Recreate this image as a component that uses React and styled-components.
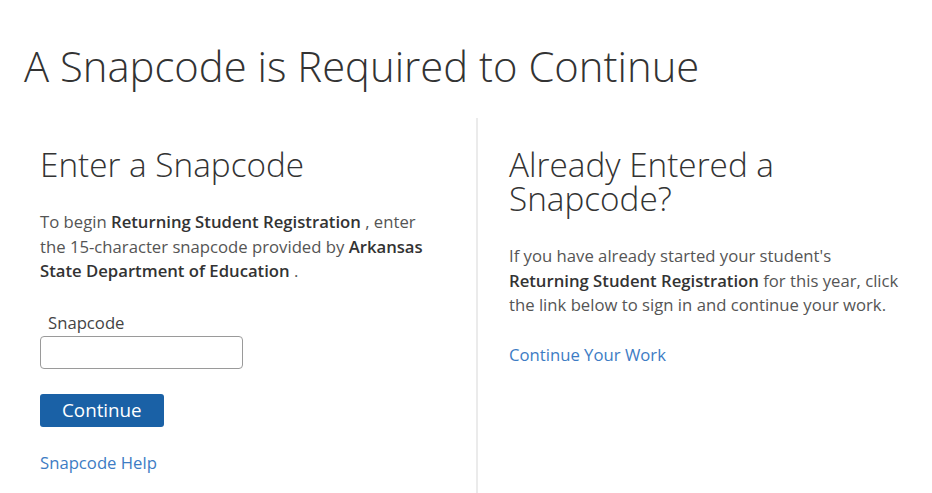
import React from 'react'
import styled, { createGlobalStyle } from 'styled-components'

const GlobalStyle = createGlobalStyle`
    body {
        margin: 0;
        background: #fff;
        font-family: "Open Sans", "Noto Sans", sans-serif;
        color: #555;
    }
`

const Page = styled.div`
    padding: 41px 24px 0;
`

const Title = styled.h1`
    margin: 0 0 27px;
    font-size: 41.8px;
    line-height: 50px;
    font-weight: 300;
    color: #333;
`

const Columns = styled.div`
    display: grid;
    grid-template-columns: 452px 1fr;
    min-height: 380px;
`

const Column = styled.section`
    padding: 29px ${props => props.right ? '0' : '41px'} 0 ${props => props.right ? '31px' : '16px'};
    border-left: ${props => props.right ? '2px solid #ebebeb' : 'none'};
`

const Heading = styled.h2`
    margin: 0 0 29px;
    font-size: 33.3px;
    line-height: 34px;
    font-weight: 300;
    color: #333;
`

const Text = styled.p`
    margin: 0 0 27px;
    font-size: 16.7px;
    line-height: 24.5px;
    color: #555;

    b {
        font-weight: 600;
        color: #333;
    }
`

const Label = styled.label`
    display: block;
    margin-left: 8px;
    font-size: 16.7px;
    line-height: 24px;
    color: #444;
`

const Input = styled.input`
    display: block;
    box-sizing: border-box;
    width: 203px;
    height: 33px;
    margin: 1px 0 25px;
    border: 1px solid #9a9a9a;
    border-radius: 4px;
    font: inherit;
`

const Button = styled.button`
    display: block;
    height: 33px;
    padding: 0 22px;
    margin-bottom: 24px;
    border: none;
    border-radius: 3px;
    background: #1a61a6;
    color: #fff;
    font-family: inherit;
    font-size: 18.8px;
    cursor: pointer;
`

const Link = styled.a`
    display: block;
    margin-top: ${props => props.tight ? '-2px' : '0'};
    font-size: 16.7px;
    line-height: 24px;
    color: #3d7cc4;
    text-decoration: none;
`

function App() {
    return (
        <Page>
            <GlobalStyle />
            <Title>A Snapcode is Required to Continue</Title>
            <Columns>
                <Column>
                    <Heading>Enter a Snapcode</Heading>
                    <Text>
                        To begin <b>Returning Student Registration</b> , enter the 15-character
                        snapcode provided by <b>Arkansas State Department of Education</b> .
                    </Text>
                    <Label htmlFor="snapcode">Snapcode</Label>
                    <Input id="snapcode" type="text" />
                    <Button type="button">Continue</Button>
                    <Link href="#">Snapcode Help</Link>
                </Column>
                <Column right>
                    <Heading>Already Entered a Snapcode?</Heading>
                    <Text>
                        If you have already started your student's <b>Returning Student Registration</b> for
                        this year, click the link below to sign in and continue your work.
                    </Text>
                    <Link href="#" tight>Continue Your Work</Link>
                </Column>
            </Columns>
        </Page>
    )
}

export default App
